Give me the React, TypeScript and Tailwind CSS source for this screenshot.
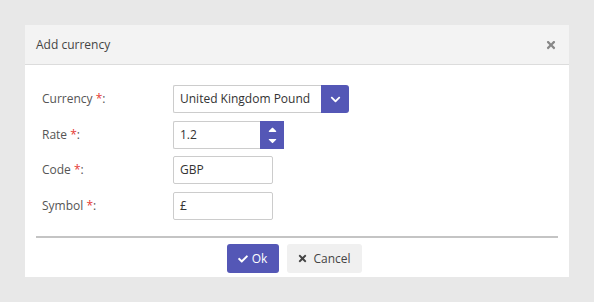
import { FaCheck, FaTimes, FaChevronDown, FaCaretUp, FaCaretDown } from 'react-icons/fa';

const font = { fontFamily: '"Open Sans", "Liberation Sans", sans-serif' };

function Label({ text }: { text: string }) {
  return (
    <div className="w-[131px] shrink-0 text-[12px] text-[#555]">
      {text} <span className="text-[#e53935]">*</span>:
    </div>
  );
}

export default function App() {
  return (
    <div className="w-[594px] h-[302px] bg-[#e8e8e8] p-[25px]" style={font}>
      <div className="w-[544px] h-[252px] bg-white flex flex-col">
        <div className="h-[40px] bg-[#f3f3f3] border-b border-[#dcdcdc] flex items-center justify-between pl-[11px] pr-[12px]">
          <span className="text-[12px] text-[#444]">Add currency</span>
          <FaTimes className="text-[#888] text-[12px]" />
        </div>

        <div className="pt-[20px] pl-[17px] flex flex-col">
          <div className="flex items-center h-[28px]">
            <Label text="Currency" />
            <div className="flex h-[28px]">
              <div className="w-[148px] border border-[#ccc] border-r-0 rounded-l-[2px] pl-[6px] flex items-center text-[12px] text-[#333]">
                United Kingdom Pound
              </div>
              <div className="w-[28px] bg-[#5457b6] rounded-r-[3px] flex items-center justify-center text-white">
                <FaChevronDown className="text-[11px]" />
              </div>
            </div>
          </div>

          <div className="flex items-center h-[28px] mt-[8px]">
            <Label text="Rate" />
            <div className="flex h-[28px]">
              <div className="w-[87px] border border-[#ccc] border-r-0 rounded-l-[2px] pl-[6px] flex items-center text-[12px] text-[#333]">
                1.2
              </div>
              <div className="w-[24px] bg-[#5457b6] flex flex-col items-center justify-center text-white leading-none">
                <FaCaretUp className="text-[13px] -mb-[1px]" />
                <FaCaretDown className="text-[13px] -mt-[1px]" />
              </div>
            </div>
          </div>

          <div className="flex items-center h-[28px] mt-[7px]">
            <Label text="Code" />
            <div className="w-[100px] h-[28px] border border-[#ccc] rounded-[2px] pl-[6px] flex items-center text-[12px] text-[#333]">
              GBP
            </div>
          </div>

          <div className="flex items-center h-[28px] mt-[8px]">
            <Label text="Symbol" />
            <div className="w-[100px] h-[28px] border border-[#ccc] rounded-[2px] pl-[6px] flex items-center text-[12px] text-[#333]">
              £
            </div>
          </div>
        </div>

        <div className="mx-[11px] mt-[16px] h-[2px] bg-[#c4c4c4]" />

        <div className="flex justify-center gap-[8px] mt-[6px] pr-[6px]">
          <button className="w-[52px] h-[29px] bg-[#5457b6] rounded-[3px] text-white text-[12px] flex items-center justify-center gap-[4px]">
            <FaCheck className="text-[10px]" />
            Ok
          </button>
          <button className="w-[75px] h-[29px] bg-[#f0f0f0] rounded-[3px] text-[#444] text-[12px] flex items-center justify-center gap-[5px]">
            <FaTimes className="text-[11px]" />
            Cancel
          </button>
        </div>
      </div>
    </div>
  );
}
